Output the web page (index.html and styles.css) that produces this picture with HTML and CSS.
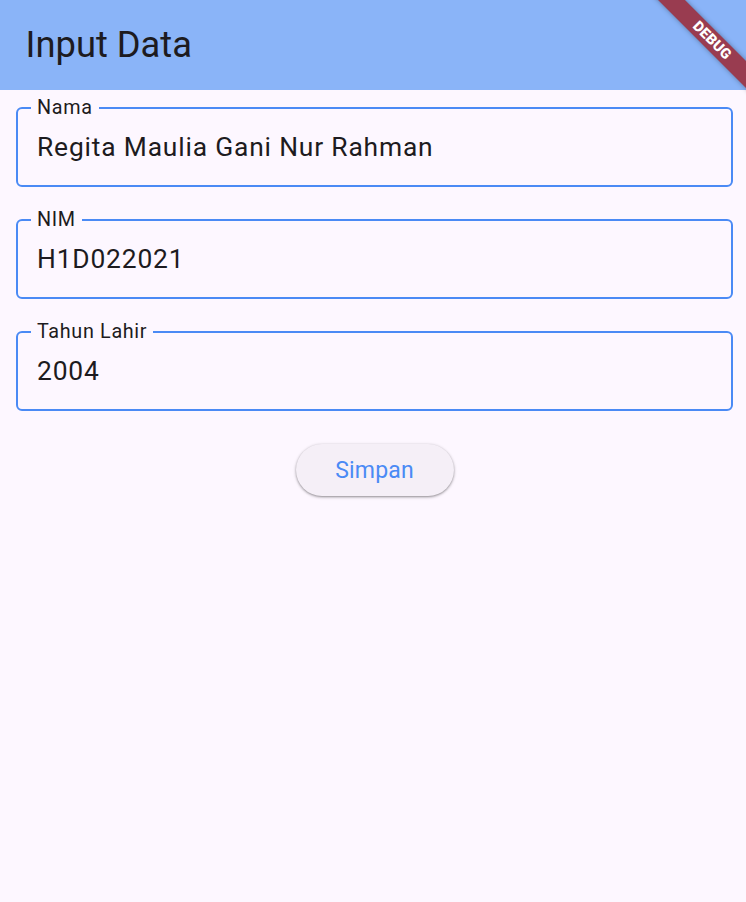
FILE: index.html
```html
<!DOCTYPE html>
<html lang="id">
<head>
<meta charset="utf-8">
<title>Input Data</title>
<link rel="stylesheet" href="styles.css">
</head>
<body>
<div class="screen">
  <header class="appbar">
    <h1 class="title">Input Data</h1>
  </header>
  <main class="form">
    <fieldset class="field">
      <legend class="label">Nama</legend>
      <div class="value">Regita Maulia Gani Nur Rahman</div>
    </fieldset>
    <fieldset class="field">
      <legend class="label">NIM</legend>
      <div class="value">H1D022021</div>
    </fieldset>
    <fieldset class="field">
      <legend class="label">Tahun Lahir</legend>
      <div class="value">2004</div>
    </fieldset>
    <div class="actions">
      <button class="btn" type="button">Simpan</button>
    </div>
  </main>
  <div class="debug-banner">DEBUG</div>
</div>
</body>
</html>
```

FILE: styles.css
```css
html, body {
  margin: 0;
  padding: 0;
}

body {
  background: #fdf7ff;
  font-family: Roboto, "Noto Sans", "Liberation Sans", sans-serif;
}

.screen {
  position: relative;
  width: 746px;
  height: 902px;
  overflow: hidden;
  background: #fdf7ff;
}

.appbar {
  height: 90px;
  background: #8ab4f8;
  display: flex;
  align-items: center;
  padding-left: 25.6px;
}

.title {
  margin: 0;
  font-size: 36.3px;
  font-weight: 400;
  line-height: 42px;
  color: #1d1b20;
}

.form {
  padding: 8px 13px 0 16px;
  display: flex;
  flex-direction: column;
  gap: 23px;
}

.field {
  margin: 0;
  min-width: 0;
  border: 2px solid #4a8af5;
  border-radius: 6px;
  padding: 14px 0 23px 13px;
}

.label {
  padding: 0 6px;
  font-size: 19.8px;
  line-height: 20px;
  letter-spacing: 0.66px;
  color: #1d1b20;
}

.value {
  padding-left: 6px;
  font-size: 26.4px;
  line-height: 30px;
  letter-spacing: 0.82px;
  color: #1d1b20;
}

.actions {
  display: flex;
  justify-content: center;
  margin-top: 10px;
}

.btn {
  width: 158px;
  height: 52px;
  border: none;
  border-radius: 999px;
  background: #f5eff7;
  color: #4a8af5;
  font-family: Roboto, "Noto Sans", "Liberation Sans", sans-serif;
  font-size: 23px;
  font-weight: 400;
  letter-spacing: 0.16px;
  box-shadow: 0 1px 2px rgba(0, 0, 0, 0.3), 0 1px 3px 1px rgba(0, 0, 0, 0.12);
  cursor: pointer;
}

.debug-banner {
  position: absolute;
  left: 632px;
  top: 31px;
  width: 160px;
  height: 19px;
  line-height: 19px;
  text-align: center;
  transform: rotate(45deg);
  background: #993c50;
  color: #ffffff;
  font-family: Roboto, "Liberation Sans", sans-serif;
  font-size: 14.5px;
  font-weight: 900;
  letter-spacing: 0.2px;
  box-shadow: 0 0 5px rgba(0, 0, 0, 0.35);
}
```
